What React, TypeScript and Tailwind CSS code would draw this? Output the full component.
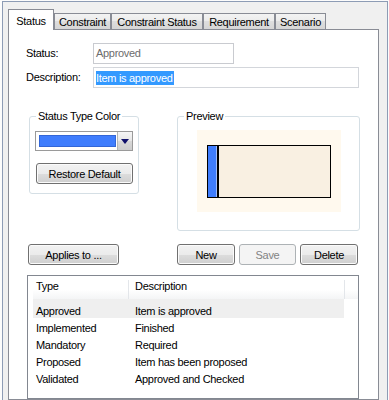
import React from 'react';

const font = "font-['Liberation_Sans',Arial,sans-serif] text-[11px] tracking-[-0.3px]";

const btn =
  'flex items-center justify-center h-[21px] pt-px rounded-[3px] border border-[#707070] bg-[linear-gradient(#f2f2f2,#ebebeb_50%,#dddddd_50%,#cfcfcf)] shadow-[inset_0_0_0_1px_#fbfbfb] text-black';

const btnDisabled =
  'flex items-center justify-center h-[21px] pt-px rounded-[3px] border border-[#adb2b5] bg-[#f4f4f4] text-[#838383]';

const tabs = [
  { label: 'Constraint', w: 'w-[57px]' },
  { label: 'Constraint Status', w: 'w-[92px]' },
  { label: 'Requirement', w: 'w-[72px]' },
  { label: 'Scenario', w: 'w-[51px]' },
];

const rows = [
  ['Approved', 'Item is approved'],
  ['Implemented', 'Finished'],
  ['Mandatory', 'Required'],
  ['Proposed', 'Item has been proposed'],
  ['Validated', 'Approved and Checked'],
];

export default function App() {
  return (
    <div className={`w-[389px] h-[400px] overflow-hidden bg-[#fcfcfc] pl-[2px] pt-[1px] pr-[1px] ${font}`}>
      <div className="h-full flex flex-col border-l border-t border-r border-[#8d9cb5] bg-[#f0f0f0] pl-[5px] pt-[7px] pr-[8px]">
        {/* tab strip */}
        <div className="flex items-end h-[20px]">
          <div className="relative z-10 -mb-px flex justify-center pt-[3px] w-[46px] h-[21px] bg-white border-l border-t border-r border-[#898c95]">
            Status
          </div>
          {tabs.map((t) => (
            <div
              key={t.label}
              className={`flex justify-center items-center h-[16px] pt-[1px] ${t.w} border-l border-t border-r border-[#898c95] bg-[linear-gradient(#f3f3f3,#ebebeb_50%,#dedede_50%,#d6d6d6)]`}
            >
              {t.label}
            </div>
          ))}
        </div>

        {/* panel */}
        <div className="flex-1 border border-[#898c95] bg-white flex flex-col pt-[13px]">
          <div className="flex items-center h-[21px] pl-[17px]">
            <span className="w-[67px]">Status:</span>
            <div className="w-[141px] h-[21px] flex items-center pl-[2px] border border-[#c9cbd0] text-[#6d6d6d]">
              Approved
            </div>
          </div>
          <div className="flex items-center h-[21px] mt-[3px] pl-[17px]">
            <span className="w-[67px]">Description:</span>
            <div className="w-[266px] h-[21px] flex items-center pl-[2px] border border-[#d3d6db]">
              <span className="bg-[#3399ff] text-white leading-[14px] pr-[1px]">Item is approved</span>
            </div>
          </div>

          {/* group boxes */}
          <div className="flex items-start mt-[21px] pl-[20px]">
            <fieldset className="w-[110px] border border-[#d5dfe5] rounded-[3px] pb-[9px]">
              <legend className="ml-[6px] px-[2px] leading-[14px]">Status Type Color</legend>
              <div className="mt-[8px] ml-[5px] w-[98px] h-[20px] flex border border-[#9a9a9a] bg-white">
                <div className="flex-1 pl-[3px] py-[3px]">
                  <div className="h-full bg-[#3f7dfd] border border-[#3366d6]" />
                </div>
                <div className="w-[15px] ml-[1px] flex items-center justify-center border-l border-[#b5b5b5] bg-[linear-gradient(#f6f6f6,#e6e6e6_50%,#d8d8d8_50%,#cdcdcd)]">
                  <div className="w-0 h-0 border-l-[4px] border-r-[4px] border-t-[5px] border-l-transparent border-r-transparent border-t-[#10106a]" />
                </div>
              </div>
              <button className={`${btn} mt-[12px] ml-[6px] w-[97px]`}>Restore Default</button>
            </fieldset>

            <fieldset className="ml-[38px] w-[183px] border border-[#d5dfe5] rounded-[3px] pb-[18px]">
              <legend className="ml-[6px] px-[2px] leading-[14px]">Preview</legend>
              <div className="mt-[7px] ml-[19px] w-[144px] h-[82px] bg-[#fff9ee] pt-[15px] pl-[10px]">
                <div className="w-[124px] h-[53px] flex border border-black bg-[#f9f0e2]">
                  <div className="w-[8px] bg-[#3f7dfd]" />
                  <div className="w-px bg-[#9fbcfb]" />
                  <div className="w-[2px] bg-black" />
                </div>
              </div>
            </fieldset>
          </div>

          {/* buttons */}
          <div className="flex mt-[13px] pl-[19px]">
            <button className={`${btn} w-[91px]`}>Applies to ...</button>
            <button className={`${btn} ml-[58px] w-[58px]`}>New</button>
            <button className={`${btnDisabled} ml-[4px] w-[57px]`}>Save</button>
            <button className={`${btn} ml-[4px] w-[58px]`}>Delete</button>
          </div>

          {/* list */}
          <div className="mt-[10px] ml-[18px] w-[332px] flex-1 border border-[#828790] bg-white pl-[5px]">
            <div className="flex h-[23px] pt-[4px] leading-[13px] bg-[linear-gradient(#ffffff,#ffffff_60%,#f4f5f6)]">
              <div className="w-[96px] pl-[3px] border-r border-[#e3e6ea]">Type</div>
              <div className="w-[216px] pl-[6px] border-r border-[#e3e6ea]">Description</div>
            </div>
            {rows.map(([type, desc], i) => (
              <div
                key={type}
                className={
                  i === 0
                    ? 'flex w-[311px] h-[19px] pt-[6px] leading-[13px] bg-[#efefef]'
                    : 'flex w-[311px] h-[17px] pt-[4px] leading-[13px]'
                }
              >
                <div className="w-[96px] pl-[3px]">{type}</div>
                <div className="pl-[6px]">{desc}</div>
              </div>
            ))}
          </div>
        </div>
      </div>
    </div>
  );
}
